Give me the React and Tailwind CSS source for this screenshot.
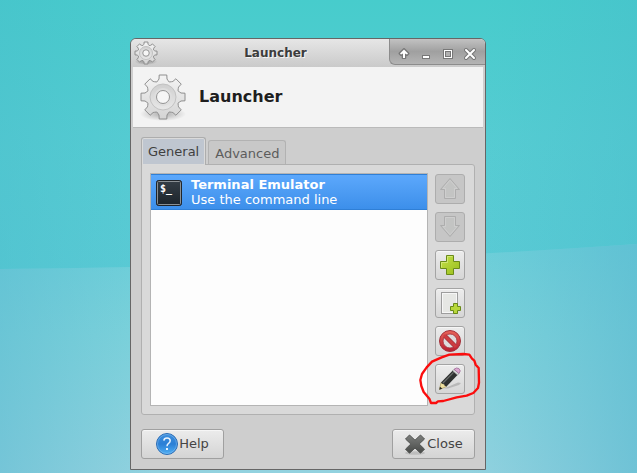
import { useId } from "react";

const TOOTH = [
  [-4.8, -16.8],
  [-4, -18],
  [-3.8, -22],
  [3.8, -22],
  [4, -18],
  [4.8, -16.8],
  [6.2, -15],
];

const gearPoints = Array.from({ length: 8 }, (_, i) => (i * Math.PI) / 4)
  .flatMap((a) =>
    TOOTH.map(([x, y]) => [
      x * Math.cos(a) - y * Math.sin(a) + 24,
      x * Math.sin(a) + y * Math.cos(a) + 24,
    ])
  )
  .map(([x, y]) => `${x.toFixed(2)},${y.toFixed(2)}`)
  .join(" ");

function Gear({ className, stroke }) {
  const id = useId();
  return (
    <svg viewBox="0 0 48 48" className={className} aria-hidden="true">
      <defs>
        <linearGradient id={id + "g"} x1="0" y1="0" x2="0" y2="1">
          <stop offset="0" stopColor="#f4f4f4" />
          <stop offset="1" stopColor="#d4d4d4" />
        </linearGradient>
        <linearGradient id={id + "r"} x1="0" y1="0" x2="0" y2="1">
          <stop offset="0" stopColor="#cfcfcf" />
          <stop offset="1" stopColor="#e8e8e8" />
        </linearGradient>
        <radialGradient id={id + "s"}>
          <stop offset="0" stopColor="#000" stopOpacity="0.3" />
          <stop offset="1" stopColor="#000" stopOpacity="0" />
        </radialGradient>
      </defs>
      <ellipse cx="24" cy="41" rx="23" ry="7" fill={`url(#${id}s)`} />
      <polygon
        points={gearPoints}
        fill={`url(#${id}g)`}
        stroke="#8e8e8e"
        strokeWidth={stroke}
        strokeLinejoin="round"
      />
      <circle cx="24" cy="24" r="13" fill={`url(#${id}r)`} stroke="#c2c2c2" strokeWidth={stroke} />
      <circle cx="24" cy="24" r="9" fill="#dedede" />
      <circle cx="24" cy="24" r="6.5" fill="#f6f6f6" stroke="#949494" strokeWidth={stroke} />
    </svg>
  );
}

function Wallpaper() {
  return (
    <svg
      className="absolute inset-0 h-full w-full"
      viewBox="0 0 637 473"
      preserveAspectRatio="none"
      aria-hidden="true"
    >
      <defs>
        <linearGradient id="sky" x1="0" y1="0" x2="0" y2="1">
          <stop offset="0" stopColor="#47cccc" />
          <stop offset="0.5" stopColor="#55ccd2" />
          <stop offset="1" stopColor="#5acad5" />
        </linearGradient>
        <linearGradient id="wave" x1="0" y1="0" x2="0" y2="1">
          <stop offset="0" stopColor="#6ccfd9" />
          <stop offset="0.4" stopColor="#7dd2db" />
          <stop offset="1" stopColor="#92d2df" />
        </linearGradient>
        <linearGradient id="sides" x1="0" y1="0" x2="1" y2="0">
          <stop offset="0" stopColor="#58b8d0" stopOpacity="0.5" />
          <stop offset="0.24" stopColor="#58b8d0" stopOpacity="0" />
          <stop offset="0.74" stopColor="#58b8d0" stopOpacity="0" />
          <stop offset="1" stopColor="#58b8d0" stopOpacity="0.6" />
        </linearGradient>
        <linearGradient id="skySides" x1="0" y1="0" x2="1" y2="0">
          <stop offset="0" stopColor="#48bccb" stopOpacity="0.4" />
          <stop offset="0.24" stopColor="#48bccb" stopOpacity="0" />
          <stop offset="0.76" stopColor="#48bccb" stopOpacity="0" />
          <stop offset="1" stopColor="#48bccb" stopOpacity="0.4" />
        </linearGradient>
      </defs>
      <rect width="637" height="272" fill="url(#sky)" />
      <rect width="637" height="272" fill="url(#skySides)" />
      <path d="M0 269 Q340 265 637 244 V473 H0Z" fill="url(#wave)" />
      <path d="M0 269 Q340 265 637 244 V473 H0Z" fill="url(#sides)" />
    </svg>
  );
}

function TitleButton({ label, children }) {
  return (
    <button type="button" aria-label={label} className="flex w-[22px] items-center justify-center">
      <svg viewBox="0 0 14 14" className="size-[14px]">
        {children}
      </svg>
    </button>
  );
}

function TitleBar() {
  return (
    <div className="flex h-7 bg-linear-to-b from-[#e6e6e6] to-[#cacaca]">
      <div className="flex items-center pl-[3px]">
        <Gear className="size-6" stroke={2} />
      </div>
      <div className="flex-1 pl-1 text-center text-[12px] leading-7 font-bold text-[#3c3c3c] [text-shadow:1px_1px_0_#f4f4f4]">
        Launcher
      </div>
      <div className="flex h-[26px] rounded-bl-[6px] border-b border-l border-[#8c8c8c] bg-linear-to-b from-[#c2c2c2] via-[#a0a0a0] to-[#b4b4b4] pt-1 pr-1 pl-[3px]">
        <TitleButton label="Roll up">
          <path
            d="M7 2 L11.5 6.500 L10 8 L8.300 6.500 V11 H5.700 V6.500 L4 8 L2.500 6.500Z"
            fill="#777"
            stroke="#777"
            strokeWidth="2"
            strokeLinejoin="round"
          />
          <path d="M7 2.500 L11 6.500 L10 7.500 L8 6.500 V11 H6 V6.500 L4 7.500 L3 6.500Z" fill="#fff" />
        </TitleButton>
        <TitleButton label="Minimize">
          <rect x="3" y="8" width="8" height="4" fill="#777" />
          <rect x="4" y="9" width="6" height="2" fill="#fff" />
        </TitleButton>
        <TitleButton label="Maximize">
          <rect x="2" y="2" width="10" height="10" fill="#777" />
          <rect x="3" y="3" width="8" height="8" fill="#fff" />
          <rect x="4" y="4" width="6" height="6" fill="#777" />
          <rect x="5" y="5" width="4" height="4" fill="#b0b0b0" />
        </TitleButton>
        <TitleButton label="Close window">
          <path d="M3 3 L11 11 M11 3 L3 11" stroke="#777" strokeWidth="4" strokeLinecap="round" />
          <path d="M3 3 L11 11 M11 3 L3 11" stroke="#fff" strokeWidth="2" strokeLinecap="round" />
        </TitleButton>
      </div>
    </div>
  );
}

function ToolButton({ label, disabled, children }) {
  return (
    <button
      type="button"
      aria-label={label}
      disabled={disabled}
      className="flex size-[30px] items-center justify-center rounded-[3px] border border-[#a4a4a4] bg-linear-to-b from-[#ececec] to-[#d6d6d6] shadow-[inset_0_1px_0_#f6f6f6] disabled:border-[#adadad] disabled:bg-none disabled:bg-[#c6c6c6] disabled:shadow-none"
    >
      <svg viewBox="0 0 24 24" className="size-6">
        {children}
      </svg>
    </button>
  );
}

function Toolbar() {
  return (
    <div className="flex flex-col gap-2 pt-px">
      <ToolButton label="Move up" disabled>
        <path d="M12 1.5 L21.5 12.5 H17.5 V21.5 H6.5 V12.5 H2.5Z" fill="#c3c4c3" stroke="#adadad" />
        <path d="M12 3.2 L19 11.5 H16.5 V20.5 H7.5 V11.5 H5Z" fill="none" stroke="#cecece" />
      </ToolButton>
      <ToolButton label="Move down" disabled>
        <path d="M12 21.5 L21.5 10.5 H17.5 V1.5 H6.5 V10.5 H2.5Z" fill="#c3c4c3" stroke="#adadad" />
        <path d="M12 19.8 L19 11.5 H16.5 V2.5 H7.5 V11.5 H5Z" fill="none" stroke="#cecece" />
      </ToolButton>
      <ToolButton label="Add item">
        <defs>
          <linearGradient id="green" x1="0" y1="0" x2="1" y2="1">
            <stop offset="0" stopColor="#c6e24a" />
            <stop offset="1" stopColor="#98bd1c" />
          </linearGradient>
        </defs>
        <path
          d="M8.5 2.5 H15.5 V8.5 H21.5 V15.5 H15.5 V21.5 H8.5 V15.5 H2.5 V8.5 H8.5Z"
          fill="url(#green)"
          stroke="#6a8a1a"
        />
        <path d="M3.5 14.5 V9.5 H9.5 V3.5 H14.5" fill="none" stroke="#dcee8c" strokeOpacity="0.7" />
      </ToolButton>
      <ToolButton label="New empty item">
        <rect x="3.5" y="1.5" width="16" height="21" fill="#e6e7e4" stroke="#9d9d9d" />
        <rect x="4.5" y="2.5" width="14" height="19" fill="none" stroke="#f6f6f6" />
        <path
          d="M15.5 12.5 H19.5 V15.5 H22.5 V19.5 H19.5 V22.5 H15.5 V19.5 H12.5 V15.5 H15.5Z"
          fill="#b8d83a"
          stroke="#6a8a1a"
        />
      </ToolButton>
      <ToolButton label="Delete item">
        <defs>
          <linearGradient id="red" x1="0" y1="0" x2="0" y2="1">
            <stop offset="0" stopColor="#e8655a" />
            <stop offset="1" stopColor="#b81f30" />
          </linearGradient>
        </defs>
        <circle cx="12" cy="12" r="10.5" fill="url(#red)" stroke="#a3303a" />
        <circle cx="12" cy="12" r="7" fill="#dedcdc" stroke="#a3303a" strokeWidth="0.8" />
        <path d="M7 7 L17 17" stroke="#a3303a" strokeWidth="4.4" />
        <path d="M6 6 L18 18" stroke="#cd3d40" strokeWidth="3" />
      </ToolButton>
      <ToolButton label="Edit item">
        <path d="M6 21.5 L20 15.5 L23 16 L21 18 L10 21.5Z" fill="#b8b8b8" />
        <path d="M1.5 22.5 L3 15.5 L8.5 19.5Z" fill="#eee0a0" stroke="#a8985a" strokeWidth="0.7" />
        <path d="M1.3 22.7 L1.9 19.7 L4.3 21.4Z" fill="#222" />
        <path d="M3 15.5 L14.5 3.8 L19.5 8 L8.5 19.5 L6.8 18.8 L6 17 L4 16.8Z" fill="#2f3130" />
        <path d="M5 16 L15.5 5.3" stroke="#6b6e6d" strokeWidth="1.2" />
        <path d="M14.5 3.8 L16 2.3 L21 6.5 L19.5 8Z" fill="#d8d8d8" stroke="#777" strokeWidth="0.6" />
        <path
          d="M16 2.3 Q18.5 0 21 1.6 Q23.5 3.8 21 6.5Z"
          fill="#dba5cf"
          stroke="#a0709a"
          strokeWidth="0.8"
        />
      </ToolButton>
    </div>
  );
}

function TerminalIcon() {
  return (
    <svg viewBox="0 0 28 28" className="size-7 shrink-0" aria-hidden="true">
      <defs>
        <linearGradient id="screen" x1="0" y1="0" x2="0" y2="1">
          <stop offset="0" stopColor="#343d45" />
          <stop offset="1" stopColor="#1d252c" />
        </linearGradient>
      </defs>
      <rect x="1.5" y="1.5" width="25" height="25" rx="2" fill="#111" stroke="#20252a" />
      <rect x="2.5" y="2.5" width="23" height="23" rx="1" fill="url(#screen)" stroke="#8a9094" />
      <text x="5" y="13" fill="#fff" className="font-['DejaVu_Sans_Mono',monospace] text-[10px] font-bold">
        $_
      </text>
    </svg>
  );
}

function LauncherList() {
  return (
    <ul
      role="listbox"
      aria-label="Launcher items"
      className="flex-1 border border-[#b4b4b4] bg-[#fdfdfd]"
    >
      <li
        role="option"
        aria-selected="true"
        className="flex h-9 items-center gap-2 border-y border-[#2f7fd6] bg-linear-to-b from-[#5ca8fc] to-[#3c8fea] pl-1 text-white"
      >
        <div className="flex pt-0.5">
          <TerminalIcon />
        </div>
        <div className="leading-[15px]">
          <div className="font-bold">Terminal Emulator</div>
          <div>Use the command line</div>
        </div>
      </li>
    </ul>
  );
}

function DialogButton({ icon, children }) {
  return (
    <button
      type="button"
      className="flex h-[30px] w-[83px] items-center justify-center gap-px rounded-[3px] border border-[#a0a0a0] bg-linear-to-b from-[#ececec] to-[#d4d4d4] text-[#444] shadow-[inset_0_1px_0_#f6f6f6]"
    >
      {icon}
      {children}
    </button>
  );
}

function HelpIcon() {
  return (
    <svg viewBox="0 0 22 22" className="size-[22px]" aria-hidden="true">
      <defs>
        <linearGradient id="blue" x1="0" y1="0" x2="0" y2="1">
          <stop offset="0" stopColor="#3f8fdc" />
          <stop offset="0.5" stopColor="#2b7fd6" />
          <stop offset="1" stopColor="#4fb0f4" />
        </linearGradient>
      </defs>
      <circle cx="11" cy="11" r="10.5" fill="url(#blue)" stroke="#2c6cb4" />
      <circle cx="11" cy="11" r="9.5" fill="none" stroke="#8cc4f4" strokeOpacity="0.5" />
      <path
        d="M7.8 7.6 Q8.2 5 11 5 Q14.2 5 14.2 7.8 Q14.2 9.4 12.6 10.4 Q11 11.4 11 13.2"
        fill="none"
        stroke="#e8f3fd"
        strokeWidth="1.5"
      />
      <rect x="10" y="15" width="2" height="2" fill="#e8f3fd" />
    </svg>
  );
}

function CloseIcon() {
  return (
    <svg viewBox="0 0 22 22" className="size-[22px]" aria-hidden="true">
      <defs>
        <linearGradient id="dark" x1="0" y1="0" x2="0" y2="1">
          <stop offset="0" stopColor="#7c7e7c" />
          <stop offset="1" stopColor="#484a48" />
        </linearGradient>
      </defs>
      <ellipse cx="11" cy="20" rx="10" ry="1.8" fill="#000" fillOpacity="0.12" />
      <path
        d="M5.5 2 L11 7.2 L16.5 2 L20.5 6 L15.2 11 L20.5 16.2 L16.5 20.2 L11 15 L5.5 20.2 L1.5 16.2 L6.8 11 L1.5 6Z"
        fill="url(#dark)"
        stroke="#505250"
        strokeLinejoin="round"
      />
    </svg>
  );
}

function RedCircle() {
  return (
    <svg
      viewBox="0 210 240 171"
      className="pointer-events-none absolute top-[311px] left-[279px] h-[57px] w-20"
      aria-hidden="true"
    >
      <path
        d="M118 224 L160 222 L178 224 L186 236 L193 242 L197 254 L206 264 L207 308 L204 324 L190 339 L170 347 L140 352 L100 363 L84 364 L78 369 L63 369 L58 356 L41 336 L34 318 L31 300 L36 282 L50 262 L66 245 L95 232 L118 224"
        fill="none"
        stroke="#fb0d0d"
        strokeWidth="7"
        strokeLinejoin="round"
        strokeLinecap="round"
      />
    </svg>
  );
}

export default function App() {
  return (
    <main className="relative min-h-screen overflow-hidden bg-[#58ccd4] font-['DejaVu_Sans','Noto_Sans',sans-serif] text-[13px]">
      <Wallpaper />
      <section
        aria-label="Launcher"
        className="absolute top-[38px] left-[130px] w-[356px] overflow-hidden rounded-t-[6px] border border-[#666] bg-[#cecece]"
      >
        <TitleBar />
        <header className="mx-0.5 flex h-[61px] items-center gap-3 border-b border-[#bababa] bg-[#f3f3f3] pl-1.5">
          <Gear className="size-12" stroke={1} />
          <h1 className="text-[16px] font-bold text-[#1e1e1e]">Launcher</h1>
        </header>
        <div className="px-2.5 pt-[9px] pb-2.5">
          <div role="tablist" className="flex items-end gap-0.5">
            <button
              type="button"
              role="tab"
              aria-selected="true"
              className="relative -mb-px h-7 rounded-t-[3px] border border-b-0 border-[#adadad] bg-[#bfc6d0] px-1.5 text-[#3f3f3f] shadow-[inset_0_0_0_1px_#dadada]"
            >
              General
            </button>
            <button
              type="button"
              role="tab"
              aria-selected="false"
              className="h-6 rounded-t-[3px] border border-b-0 border-[#b2b2b2] bg-[#c8c8c8] px-1.5 pt-0.5 text-[#5c5c5c]"
            >
              Advanced
            </button>
          </div>
          <div
            role="tabpanel"
            className="flex gap-[7px] rounded-[3px] rounded-tl-none border border-[#b0b0b0] bg-[#d9d9d9] py-2 pr-[9px] pl-2"
          >
            <LauncherList />
            <div className="h-[233px]">
              <Toolbar />
            </div>
          </div>
          <footer className="flex justify-between pt-3.5">
            <DialogButton icon={<HelpIcon />}>Help</DialogButton>
            <DialogButton icon={<CloseIcon />}>Close</DialogButton>
          </footer>
        </div>
        <RedCircle />
      </section>
    </main>
  );
}
